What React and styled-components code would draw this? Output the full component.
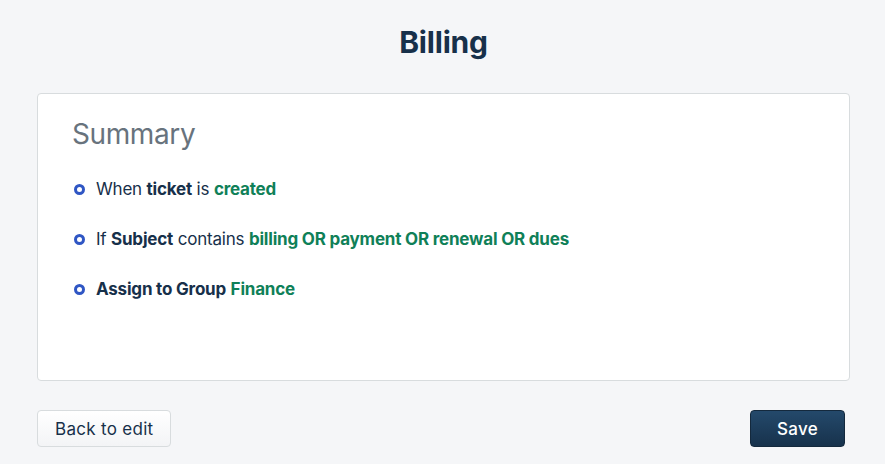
import React from "react"
import styled, { createGlobalStyle } from "styled-components"

const GlobalStyle = createGlobalStyle`
    html, body {
        margin: 0;
        padding: 0;
        background: #f5f6f8;
        font-family: Inter, "Noto Sans", sans-serif;
        color: #17304a;
    }
`

const Page = styled.div`
    width: 885px;
    height: 464px;
    box-sizing: border-box;
    padding: 0 35px 0 37px;
    display: flex;
    flex-direction: column;
`

const Title = styled.h1`
    margin: 23px 0 0;
    height: 38px;
    text-align: center;
    font-size: 30px;
    font-weight: 700;
    line-height: 38px;
    color: #17304a;
    letter-spacing: -0.2px;
`

const Card = styled.section`
    margin-top: 32px;
    height: 288px;
    box-sizing: border-box;
    background: #fff;
    border: 1px solid #d8dcde;
    border-radius: 4px;
    padding: 18px 36px;
`

const CardTitle = styled.h2`
    margin: 0 0 0 -2px;
    font-size: 28px;
    font-weight: 400;
    line-height: 44px;
    letter-spacing: -0.4px;
    color: #68737d;
`

const Rules = styled.ul`
    list-style: none;
    margin: 22px 0 0;
    padding: 0;
    display: flex;
    flex-direction: column;
    gap: 28px;
`

const Rule = styled.li`
    display: flex;
    align-items: center;
    gap: 11px;
    font-size: 17px;
    line-height: 22px;
    letter-spacing: -0.2px;
    color: #17304a;
`

const Dot = styled.span`
    width: 5px;
    height: 5px;
    border: 3px solid #2f56c4;
    border-radius: 50%;
    flex-shrink: 0;
`

const Key = styled.strong`
    font-weight: 700;
`

const Value = styled.strong`
    font-weight: 700;
    color: #0f8058;
`

const Footer = styled.div`
    margin-top: 29px;
    display: flex;
    justify-content: space-between;
    padding-right: 5px;
`

const Button = styled.button`
    height: 37px;
    padding: 0 ${({ primary }) => primary ? "26px" : "17px"};
    border-radius: 4px;
    font-family: Inter, "Noto Sans", sans-serif;
    font-size: 17px;
    font-weight: ${({ primary }) => primary ? 500 : 400};
    letter-spacing: 0.3px;
    cursor: pointer;
    color: ${({ primary }) => primary ? "#fff" : "#17304a"};
    background: ${({ primary }) => primary
        ? "linear-gradient(#24496b, #17324c)"
        : "linear-gradient(#fff, #f3f4f6)"};
    border: 1px solid ${({ primary }) => primary ? "#14293d" : "#d8dcde"};
`

const App = () => {
    return (
        <>
            <GlobalStyle />
            <Page>
                <Title>Billing</Title>
                <Card>
                    <CardTitle>Summary</CardTitle>
                    <Rules>
                        <Rule>
                            <Dot />
                            <span>When <Key>ticket</Key> is <Value>created</Value></span>
                        </Rule>
                        <Rule>
                            <Dot />
                            <span>If <Key>Subject</Key> contains <Value>billing OR payment OR renewal OR dues</Value></span>
                        </Rule>
                        <Rule>
                            <Dot />
                            <span><Key>Assign to Group</Key> <Value>Finance</Value></span>
                        </Rule>
                    </Rules>
                </Card>
                <Footer>
                    <Button>Back to edit</Button>
                    <Button primary>Save</Button>
                </Footer>
            </Page>
        </>
    )
}

export default App
